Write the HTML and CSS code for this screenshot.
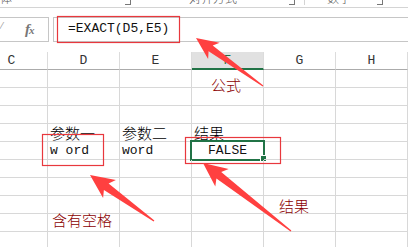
FILE: index.html
```html
<!DOCTYPE html>
<html lang="zh-CN">
<head>
<meta charset="utf-8">
<title>EXACT</title>
<link rel="stylesheet" href="styles.css">
</head>
<body>
<div class="page">
  <div class="ribbon">
    <span class="rb-label rb-font">体</span>
    <span class="rb-launch rb-l1"></span>
    <span class="rb-label rb-align">对齐方式</span>
    <span class="rb-launch rb-l2"></span>
    <span class="rb-sep"></span>
    <span class="rb-label rb-num">数字</span>
    <span class="rb-launch rb-l3"></span>
  </div>

  <div class="fbar">
    <div class="namebox">
      <span class="nb-arrow">⁄</span>
      <span class="fx">f<span class="fx-x">x</span></span>
    </div>
    <div class="formula">=EXACT(D5,E5)</div>
  </div>

  <div class="sheet">
    <div class="hd">C</div><div class="hd">D</div><div class="hd">E</div><div class="hd sel">F</div><div class="hd">G</div><div class="hd">H</div>

    <div class="c"></div><div class="c"></div><div class="c"></div><div class="c"></div><div class="c"></div><div class="c"></div>
    <div class="c"></div><div class="c"></div><div class="c"></div><div class="c"></div><div class="c"></div><div class="c"></div>
    <div class="c"></div><div class="c"></div><div class="c"></div><div class="c"></div><div class="c"></div><div class="c"></div>
    <div class="c"></div><div class="c cjk">参数一</div><div class="c cjk">参数二</div><div class="c cjk">结果</div><div class="c"></div><div class="c"></div>
    <div class="c"></div><div class="c mono">w ord</div><div class="c mono">word</div><div class="c mono center active">FALSE<span class="selbox"><span class="handle"></span></span></div><div class="c"></div><div class="c"></div>
    <div class="c"></div><div class="c"></div><div class="c"></div><div class="c"></div><div class="c"></div><div class="c"></div>
    <div class="c"></div><div class="c"></div><div class="c"></div><div class="c"></div><div class="c"></div><div class="c"></div>
    <div class="c"></div><div class="c"></div><div class="c"></div><div class="c"></div><div class="c"></div><div class="c"></div>
    <div class="c"></div><div class="c"></div><div class="c"></div><div class="c"></div><div class="c"></div><div class="c"></div>
    <div class="c"></div><div class="c"></div><div class="c"></div><div class="c"></div><div class="c"></div><div class="c"></div>
  </div>

  <svg class="marks" width="408" height="247" viewBox="0 0 408 247" xmlns="http://www.w3.org/2000/svg">
    <rect x="57.5" y="16.5" width="122" height="26" fill="none" stroke="#e8383d" stroke-width="1.2"/>
    <rect x="42.5" y="134.5" width="61" height="31" fill="none" stroke="#e8383d" stroke-width="1.2"/>
    <rect x="185.5" y="137.5" width="95" height="26" fill="none" stroke="#e8383d" stroke-width="1.2"/>
    <polygon fill="#ff4040" points="196,38 219.7,42.7 212.7,45.6 263.3,85.5 262.7,86.5 208.6,51.3 208.1,58.9"/>
    <polygon fill="#ff4040" points="90,175 115.9,180.1 108.6,183.4 154.4,220.5 153.6,221.5 103.9,189.9 103.1,197.9"/>
    <polygon fill="#ff4040" points="203,163 228.7,169 221.2,172 291.4,230.5 290.6,231.5 216.4,178.4 215.3,186.4"/>
  </svg>

  <div class="note note-formula">公式</div>
  <div class="note note-space">含有空格</div>
  <div class="note note-result">结果</div>
</div>
</body>
</html>
```

FILE: styles.css
```css
html, body {
  margin: 0;
  padding: 0;
  background: #ffffff;
}

.page {
  position: relative;
  width: 408px;
  height: 247px;
  overflow: hidden;
  font-family: "Liberation Mono", "Noto Sans CJK SC", monospace;
  color: #222222;
}

/* ribbon remnant */
.ribbon {
  position: relative;
  height: 7px;
  border-bottom: 1px solid #d4d4d4;
  overflow: hidden;
  font-family: "Noto Sans CJK SC", sans-serif;
  font-weight: 300;
  font-size: 12px;
  color: #555555;
}

.rb-label {
  position: absolute;
  top: -10px;
  line-height: 15px;
}

.rb-font { left: 0; }
.rb-align { left: 189px; }
.rb-num { left: 327px; }

.rb-launch {
  position: absolute;
  top: 0;
  width: 5px;
  height: 4px;
  border-right: 1px solid #777777;
  border-bottom: 1px solid #777777;
}

.rb-l1 { left: 125px; }
.rb-l2 { left: 289px; }
.rb-l3 { left: 377px; }

.rb-sep {
  position: absolute;
  left: 304px;
  top: 0;
  width: 1px;
  height: 5px;
  background: #d4d4d4;
}

/* formula bar */
.fbar {
  display: flex;
  gap: 4px;
  padding-top: 9px;
  height: 25px;
  margin-bottom: 10px;
}

.namebox {
  position: relative;
  width: 49px;
  height: 25px;
  box-sizing: border-box;
  border: 1px solid #c6c6c6;
  border-left: none;
  flex: none;
}

.nb-arrow {
  position: absolute;
  left: 1px;
  top: 3px;
  font-family: "DejaVu Sans", sans-serif;
  font-size: 9px;
  color: #9a9a9a;
}

.fx {
  position: absolute;
  left: 25px;
  top: 3px;
  font-family: "Liberation Serif", serif;
  font-style: italic;
  font-weight: bold;
  font-size: 15px;
  color: #777777;
  letter-spacing: -1px;
}

.fx-x {
  font-size: 11px;
}

.formula {
  flex: 1;
  height: 25px;
  box-sizing: border-box;
  border: 1px solid #c6c6c6;
  border-right: none;
  padding-left: 14px;
  font-size: 13px;
  line-height: 22px;
  color: #111111;
}

/* grid */
.sheet {
  display: grid;
  grid-template-columns: repeat(6, 72px);
  grid-auto-rows: 18px;
  margin-left: -24px;
}

.hd, .c {
  box-sizing: border-box;
  border-right: 1px solid #d8d8d8;
  border-bottom: 1px solid #d8d8d8;
}

.hd {
  border-right-color: #dcdcdc;
  border-bottom-color: #ababab;
  text-align: center;
  font-size: 13px;
  line-height: 17px;
  color: #333333;
}

.hd.sel {
  background: #e1e1e1;
  color: #217346;
  border-bottom: 2px solid #217346;
}

.c {
  position: relative;
  padding-left: 2px;
  font-size: 13px;
  line-height: 17px;
  white-space: pre;
}

.c.cjk {
  font-family: "Noto Sans CJK SC", sans-serif;
  font-weight: 300;
  font-size: 15px;
  line-height: 17px;
  color: #000000;
}

.c.mono {
  color: #111111;
}

.c.center {
  text-align: center;
  padding-left: 0;
}

.selbox {
  position: absolute;
  left: -2px;
  top: -2px;
  width: 75px;
  height: 21px;
  box-sizing: border-box;
  border: 2px solid #217346;
}

.handle {
  position: absolute;
  left: 69px;
  top: 14px;
  width: 5px;
  height: 5px;
  background: #217346;
  outline: 1px solid #ffffff;
}

/* annotations */
.marks {
  position: absolute;
  left: 0;
  top: 0;
  pointer-events: none;
}

.note {
  position: absolute;
  font-family: "Noto Sans CJK SC", sans-serif;
  font-weight: 300;
  font-size: 15px;
  line-height: 17px;
  color: #8b0000;
}

.note-formula { left: 211px; top: 76px; }
.note-space { left: 52px; top: 211px; }
.note-result { left: 279px; top: 197px; }
```
